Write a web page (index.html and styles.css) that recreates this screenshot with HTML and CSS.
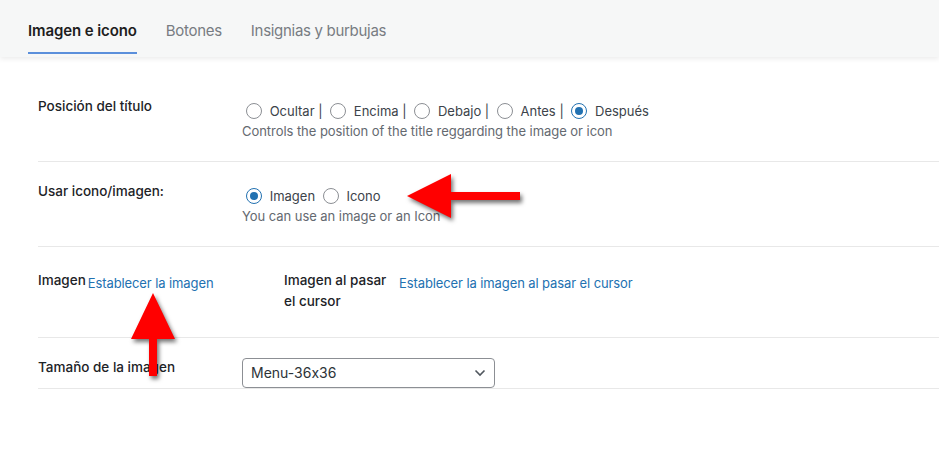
FILE: index.html
```html
<!DOCTYPE html>
<html lang="es">
<head>
<meta charset="utf-8">
<title>Imagen e icono</title>
<link rel="stylesheet" href="styles.css">
</head>
<body>
<div class="page">
  <nav class="tabs">
    <a class="tab active">Imagen e icono</a>
    <a class="tab">Botones</a>
    <a class="tab">Insignias y burbujas</a>
  </nav>

  <div class="form">
    <div class="row row-1">
      <div class="label">Posición del título</div>
      <div class="field">
        <div class="radios">
          <span class="radio"></span> Ocultar | <span class="radio"></span> Encima | <span class="radio"></span> Debajo | <span class="radio"></span> Antes | <span class="radio checked"></span> Después
        </div>
        <div class="desc">Controls the position of the title reggarding the image or icon</div>
      </div>
    </div>

    <div class="row row-2">
      <div class="label">Usar icono/imagen:</div>
      <div class="field">
        <div class="radios">
          <span class="radio checked"></span> Imagen <span class="radio"></span> Icono
        </div>
        <div class="desc">You can use an image or an Icon</div>
      </div>
    </div>

    <div class="row row-3">
      <div class="img-cell">
        <span class="img-label">Imagen</span><a class="link first-link">Establecer la imagen</a>
      </div>
      <div class="img-cell hover-cell">
        <span class="img-label hover-label">Imagen al pasar el cursor</span>
        <a class="link">Establecer la imagen al pasar el cursor</a>
      </div>
    </div>

    <div class="row row-4">
      <div class="label">Tamaño de la imagen</div>
      <div class="field">
        <div class="select">
          <span>Menu-36x36</span>
          <svg class="chev" width="12" height="8" viewBox="0 0 12 8"><path d="M1.5 1.5 L6 6 L10.5 1.5" fill="none" stroke="#50575e" stroke-width="1.6"/></svg>
        </div>
      </div>
    </div>
  </div>

  <svg class="arrow arrow-left" width="130" height="60" viewBox="0 0 130 60">
    <polygon points="2,24 46,2 46,20 115,20 115,28 46,28 46,46" fill="#ff0000"/>
  </svg>
  <svg class="arrow arrow-up" width="60" height="100" viewBox="0 0 60 100">
    <polygon points="24,2 46,48 28,48 28,85 20,85 20,48 2,48" fill="#ff0000"/>
  </svg>
</div>
</body>
</html>
```

FILE: styles.css
```css
* { box-sizing: border-box; }
html, body { margin: 0; padding: 0; background: #fff; }
body {
  font-family: Inter, "Noto Sans", "Liberation Sans", sans-serif;
  font-feature-settings: "calt" 0;
  color: #1d2327;
  width: 939px;
  height: 459px;
  overflow: hidden;
}
.page { position: relative; width: 939px; height: 459px; }

.tabs {
  height: 57px;
  background: #f6f7f7;
  display: flex;
  gap: 29px;
  padding-left: 28px;
  box-shadow: 0 2px 5px rgba(0,0,0,0.08);
  position: relative;
  z-index: 1;
}
.tab {
  font-size: 15px;
  line-height: 20px;
  color: #787c82;
  padding-top: 21px;
  height: 57px;
  letter-spacing: -0.3px;
}
.tab.active {
  color: #1e1e1e;
  font-weight: 600;
  letter-spacing: -0.1px;
  border-bottom: 2px solid #5b8fdb;
  height: 54px;
}

.form { padding-left: 38px; }
.row {
  display: flex;
  border-bottom: 1px solid #e8e8e8;
}
.label {
  width: 204px;
  flex: none;
  font-size: 13.5px;
  line-height: 20px;
  font-weight: 500;
  color: #1d2327;
}
.field { font-size: 13px; line-height: 20px; color: #3c434a; }
.radios { white-space: nowrap; }
.radio {
  display: inline-block;
  width: 16px;
  height: 16px;
  border: 1px solid #8c8f94;
  border-radius: 50%;
  vertical-align: -3px;
  margin: 0 4px 0 4px;
  background: #fff;
  position: relative;
}
.radio.checked { border-color: #2271b1; }
.radio.checked::after {
  content: "";
  position: absolute;
  left: 3px; top: 3px;
  width: 8px; height: 8px;
  border-radius: 50%;
  background: #2271b1;
}
.desc { color: #646970; font-size: 13px; line-height: 20px; letter-spacing: -0.05px; }

.row-1 { height: 105px; padding-top: 39px; }
.row-1 .field { padding-top: 5px; }
.row-2 { height: 85px; padding-top: 19px; }
.row-2 .field { padding-top: 5px; }

.row-3 { height: 91px; padding-top: 23px; }
.img-cell { display: flex; align-items: flex-start; }
.img-cell:first-child { width: 246px; }
.img-label { font-size: 13.5px; line-height: 21px; font-weight: 500; }
.hover-label { width: 115px; }
.link {
  color: #2271b1;
  font-size: 13px;
  line-height: 20px;
  padding-top: 3px;
  letter-spacing: -0.1px;
}
.first-link { margin-left: 2px; }

.row-4 { height: 51px; padding-top: 19px; position: relative; }
.row-4 .field { margin-top: 1px; }
.select {
  width: 253px;
  height: 30px;
  border: 1px solid #8c8f94;
  border-radius: 4px;
  display: flex;
  align-items: center;
  justify-content: space-between;
  padding: 0 8px 0 8px;
  font-size: 14px;
  color: #2c3338;
  background: #fff;
}

.arrow {
  position: absolute;
  filter: drop-shadow(2px 3px 2px rgba(0,0,0,0.55));
}
.arrow-left { left: 405px; top: 172px; }
.arrow-up { left: 129px; top: 291px; }
```
